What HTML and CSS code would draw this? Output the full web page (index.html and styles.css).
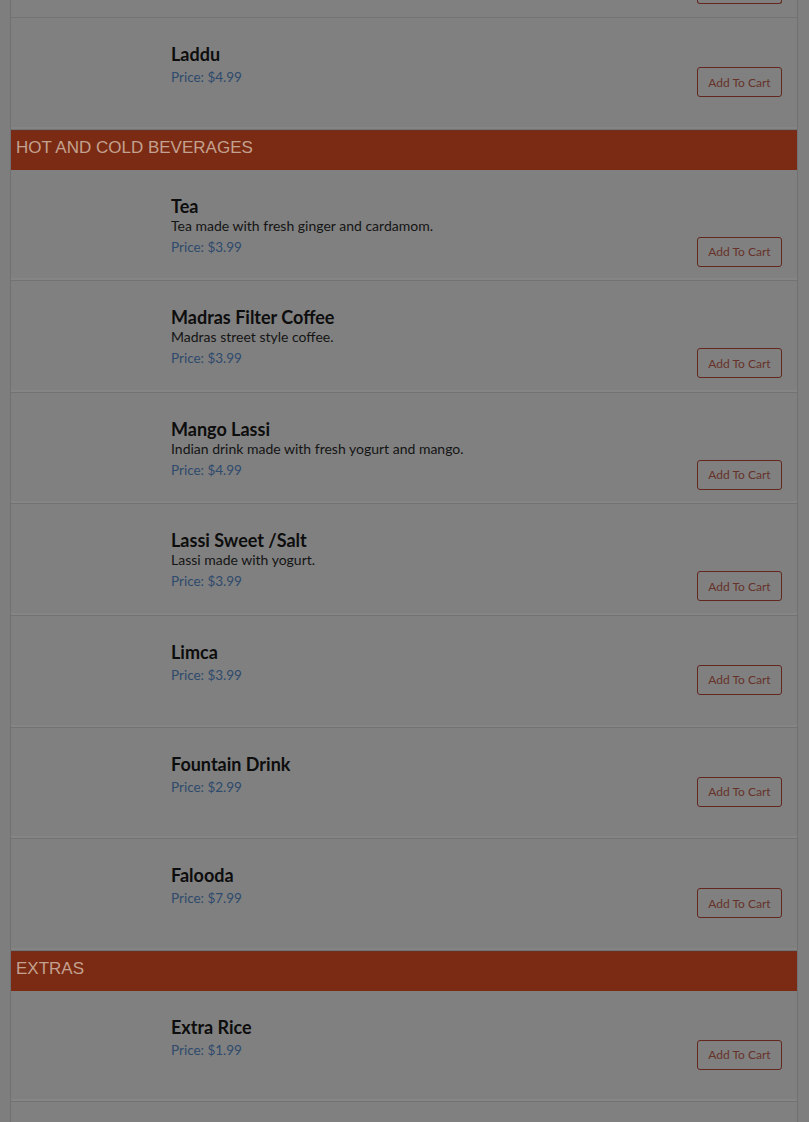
FILE: index.html
```html
<!DOCTYPE html>
<html>
<head>
<meta charset="utf-8">
<link rel="stylesheet" href="styles.css">
</head>
<body>
<div class="menu">
  <div class="item-tail"><span class="btn-edge"></span></div>
  <div class="item">
    <div class="thumb"></div>
    <div class="info">
      <div class="name">Laddu</div>
      <div class="bottom"><span class="price">Price: $4.99</span><button class="add">Add To Cart</button></div>
    </div>
  </div>
  <div class="cat">HOT AND COLD BEVERAGES</div>
  <div class="item">
    <div class="thumb"></div>
    <div class="info">
      <div class="name">Tea</div>
      <div class="desc">Tea made with fresh ginger and cardamom.</div>
      <div class="bottom"><span class="price">Price: $3.99</span><button class="add">Add To Cart</button></div>
    </div>
  </div>
  <div class="item">
    <div class="thumb"></div>
    <div class="info">
      <div class="name">Madras Filter Coffee</div>
      <div class="desc">Madras street style coffee.</div>
      <div class="bottom"><span class="price">Price: $3.99</span><button class="add">Add To Cart</button></div>
    </div>
  </div>
  <div class="item">
    <div class="thumb"></div>
    <div class="info">
      <div class="name">Mango Lassi</div>
      <div class="desc">Indian drink made with fresh yogurt and mango.</div>
      <div class="bottom"><span class="price">Price: $4.99</span><button class="add">Add To Cart</button></div>
    </div>
  </div>
  <div class="item">
    <div class="thumb"></div>
    <div class="info">
      <div class="name">Lassi Sweet /Salt</div>
      <div class="desc">Lassi made with yogurt.</div>
      <div class="bottom"><span class="price">Price: $3.99</span><button class="add">Add To Cart</button></div>
    </div>
  </div>
  <div class="item">
    <div class="thumb"></div>
    <div class="info">
      <div class="name">Limca</div>
      <div class="bottom"><span class="price">Price: $3.99</span><button class="add">Add To Cart</button></div>
    </div>
  </div>
  <div class="item">
    <div class="thumb"></div>
    <div class="info">
      <div class="name">Fountain Drink</div>
      <div class="bottom"><span class="price">Price: $2.99</span><button class="add">Add To Cart</button></div>
    </div>
  </div>
  <div class="item">
    <div class="thumb"></div>
    <div class="info">
      <div class="name">Falooda</div>
      <div class="bottom"><span class="price">Price: $7.99</span><button class="add">Add To Cart</button></div>
    </div>
  </div>
  <div class="cat">EXTRAS</div>
  <div class="item">
    <div class="thumb"></div>
    <div class="info">
      <div class="name">Extra Rice</div>
      <div class="bottom"><span class="price">Price: $1.99</span><button class="add">Add To Cart</button></div>
    </div>
  </div>
  <div class="item item-cut"></div>
</div>
</body>
</html>
```

FILE: styles.css
```css
html, body {
  margin: 0;
  padding: 0;
  background: #7e7e7e;
  overflow: hidden;
}
body {
  font-family: "Lato", "Noto Sans", sans-serif;
  padding: 0 11px 0 10px;
}
.menu {
  background: #808080;
  border-left: 1px solid #717171;
  border-right: 1px solid #717171;
}
.item-tail {
  height: 18px;
  box-sizing: border-box;
  display: flex;
  justify-content: flex-end;
  align-items: flex-start;
  padding-right: 15px;
  border-bottom: 1px solid #737373;
}
.btn-edge {
  width: 85px;
  height: 4px;
  box-sizing: border-box;
  border: 1px solid #62281e;
  border-top: none;
  border-radius: 0 0 3px 3px;
}
.item {
  display: flex;
  box-sizing: border-box;
  min-height: 111.6px;
  padding: 25px 15px 13px 0;
  border-bottom: 1px solid #737373;
  box-shadow: inset 0 -2px 0 #858585;
}
.thumb {
  width: 160px;
  flex: none;
}
.info {
  flex: 1;
  display: flex;
  flex-direction: column;
}
.name {
  font-size: 18px;
  font-weight: bold;
  line-height: 22px;
  color: #0d0d0d;
}
.desc {
  font-size: 14px;
  line-height: 18px;
  color: #141414;
}
.bottom {
  display: flex;
  justify-content: space-between;
  align-items: flex-start;
  margin-top: 2px;
}
.price {
  font-size: 13.5px;
  line-height: 20px;
  color: #2e4a6c;
}
.add {
  width: 85px;
  height: 30px;
  box-sizing: border-box;
  border: 1px solid #62281e;
  border-radius: 3px;
  background: transparent;
  color: #66322a;
  font-family: "Lato", "Noto Sans", sans-serif;
  font-size: 12px;
  padding: 0;
}
.cat {
  height: 40px;
  box-sizing: border-box;
  background: #7b2b13;
  color: #c3a190;
  font-family: "Liberation Sans", Arial, sans-serif;
  font-size: 17px;
  line-height: 34px;
  padding-left: 5px;
  border-top: 1px solid #6e3020;
}
```
